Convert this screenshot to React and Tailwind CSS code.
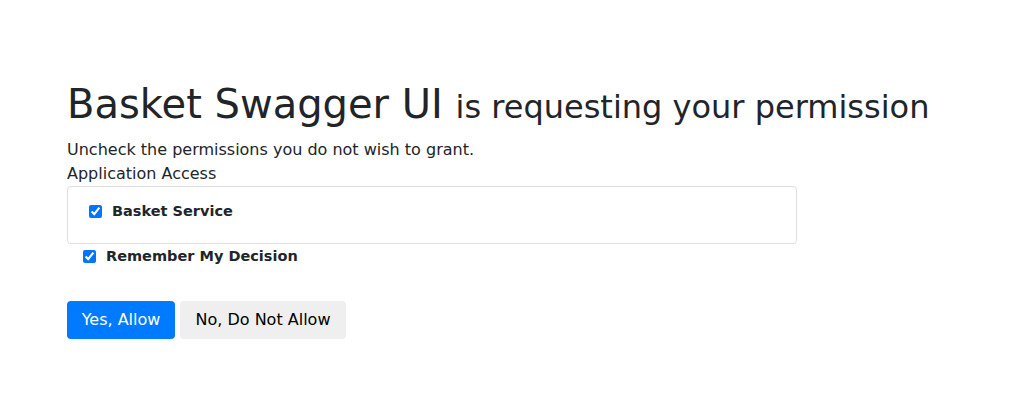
export default function App() {
  return (
    <div
      className="min-h-screen bg-white text-[#212529] px-[67px] pt-[80px]"
      style={{ fontFamily: '"DejaVu Sans", "Noto Sans", sans-serif' }}
    >
      <h1 className="text-[40px] leading-[1.2] font-normal">
        Basket Swagger UI{' '}
        <span className="text-[32px]">is requesting your permission</span>
      </h1>
      <p className="mt-[10px] text-[16px] leading-[24px]">Uncheck the permissions you do not wish to grant.</p>
      <p className="text-[16px] leading-[24px]">Application Access</p>
      <div className="w-[730px] h-[58px] border border-[#dfdfdf] rounded pt-[14px] pl-[21px]">
        <label className="flex items-center gap-[10px] text-[14.5px] font-bold">
          <input type="checkbox" defaultChecked className="w-[13px] h-[13px] accent-[#0075ff]" />
          Basket Service
        </label>
      </div>
      <label className="flex items-center gap-[10px] text-[14.5px] font-bold pl-[16px] leading-[24px]">
        <input type="checkbox" defaultChecked className="w-[13px] h-[13px] accent-[#0075ff]" />
        Remember My Decision
      </label>
      <div className="flex gap-[5px] mt-[33px]">
        <button className="h-[38px] w-[108px] rounded bg-[#007bff] text-white text-[16px]">Yes, Allow</button>
        <button className="h-[38px] w-[166px] rounded bg-[#efefef] text-black text-[16px]">No, Do Not Allow</button>
      </div>
    </div>
  );
}
